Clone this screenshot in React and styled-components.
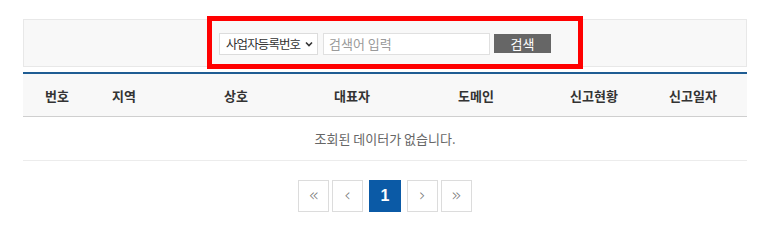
import styled, { createGlobalStyle } from "styled-components";

const GlobalStyle = createGlobalStyle`
  body {
    margin: 0;
    background: #fff;
    font-family: "Noto Sans CJK KR", "Noto Sans", sans-serif;
    color: #333;
  }
`;

const columns = [
  { label: "번호" },
  { label: "지역" },
  { label: "상호" },
  { label: "대표자" },
  { label: "도메인" },
  { label: "신고현황" },
  { label: "신고일자", offset: 14 },
];

function App() {
  return (
    <>
      <GlobalStyle />
      <Page>
        <SearchBox>
          <Highlight />
          <SelectWrap>
            <span>사업자등록번호</span>
            <svg width="8" height="6" viewBox="0 0 8 6">
              <path d="M1 1.5 L4 4.5 L7 1.5" fill="none" stroke="#333" strokeWidth="1.6" />
            </svg>
          </SelectWrap>
          <SearchInput placeholder="검색어 입력" />
          <SearchButton>검색</SearchButton>
        </SearchBox>

        <Table>
          <HeadRow>
            {columns.map((c) => (
              <HeadCell key={c.label} $offset={c.offset}>
                {c.label}
              </HeadCell>
            ))}
          </HeadRow>
          <EmptyRow>조회된 데이터가 없습니다.</EmptyRow>
        </Table>

        <Pager>
          <PageBtn>«</PageBtn>
          <PageBtn>‹</PageBtn>
          <Numbers>
            <PageBtn $active>1</PageBtn>
          </Numbers>
          <PageBtn>›</PageBtn>
          <PageBtn>»</PageBtn>
        </Pager>
      </Page>
    </>
  );
}

export default App;

const Page = styled.div`
  width: 724px;
  margin: 0 0 0 23px;
  padding-top: 19px;
`;

const SearchBox = styled.div`
  position: relative;
  box-sizing: border-box;
  height: 48px;
  border: 1px solid #e8e8e8;
  background: #f8f8f8;
  display: flex;
  align-items: center;
  justify-content: center;
`;

const Highlight = styled.div`
  position: absolute;
  left: 183px;
  top: -4px;
  width: 376px;
  height: 53px;
  box-sizing: border-box;
  border: 5px solid #ff0000;
  pointer-events: none;
`;

const SelectWrap = styled.div`
  box-sizing: border-box;
  width: 99px;
  height: 22px;
  background: #fff;
  border: 1px solid #dcdcdc;
  display: flex;
  align-items: center;
  justify-content: space-between;
  padding: 0 4px 0 6px;
  font-size: 12.5px;
  letter-spacing: -0.9px;
  white-space: nowrap;
  color: #333;
  margin-right: 5px;
  margin-top: 1px;
`;

const SearchInput = styled.input`
  box-sizing: border-box;
  width: 167px;
  height: 22px;
  border: 1px solid #e0e0e0;
  background: #fff;
  padding: 0 5px;
  font-family: inherit;
  font-size: 13px;
  margin-right: 4px;
  margin-top: 1px;
  outline: none;
  &::placeholder {
    color: #9a9a9a;
  }
`;

const SearchButton = styled.button`
  box-sizing: border-box;
  width: 57px;
  height: 19px;
  border: none;
  background: #666;
  color: #fff;
  font-family: inherit;
  font-size: 13px;
  padding: 0;
  line-height: 19px;
`;

const Table = styled.div`
  margin-top: 5px;
  border-top: 2px solid #1f5d93;
`;

const HeadRow = styled.div`
  display: grid;
  grid-template-columns: 68px 66px 158px 74px 174px 62px 1fr;
  height: 42px;
  background: #f8f8f8;
  border-bottom: 1px solid #cfcfcf;
`;

const HeadCell = styled.div`
  display: flex;
  align-items: center;
  justify-content: center;
  padding-left: ${(p) => p.$offset || 0}px;
  font-size: 13px;
  font-weight: 700;
  color: #333;
`;

const EmptyRow = styled.div`
  height: 43px;
  display: flex;
  align-items: center;
  justify-content: center;
  font-size: 13px;
  color: #666;
  border-bottom: 1px solid #ececec;
`;

const Pager = styled.div`
  display: flex;
  justify-content: center;
  gap: 3px;
  margin-top: 19px;
`;

const Numbers = styled.div`
  display: flex;
  margin: 0 3px;
`;

const PageBtn = styled.div`
  box-sizing: border-box;
  width: ${(p) => (p.$active ? 32 : 31)}px;
  height: 32px;
  display: flex;
  align-items: center;
  justify-content: center;
  border: 1px solid ${(p) => (p.$active ? "#0b5aa6" : "#dcdcdc")};
  background: ${(p) => (p.$active ? "#0b5aa6" : "#fff")};
  color: ${(p) => (p.$active ? "#fff" : "#777")};
  font-family: ${(p) => (p.$active ? '"Liberation Sans", Arial, sans-serif' : '"DejaVu Sans", sans-serif')};
  font-weight: ${(p) => (p.$active ? 700 : 300)};
  font-size: ${(p) => (p.$active ? 16 : 17)}px;
  padding-bottom: ${(p) => (p.$active ? 0 : 2)}px;
`;
